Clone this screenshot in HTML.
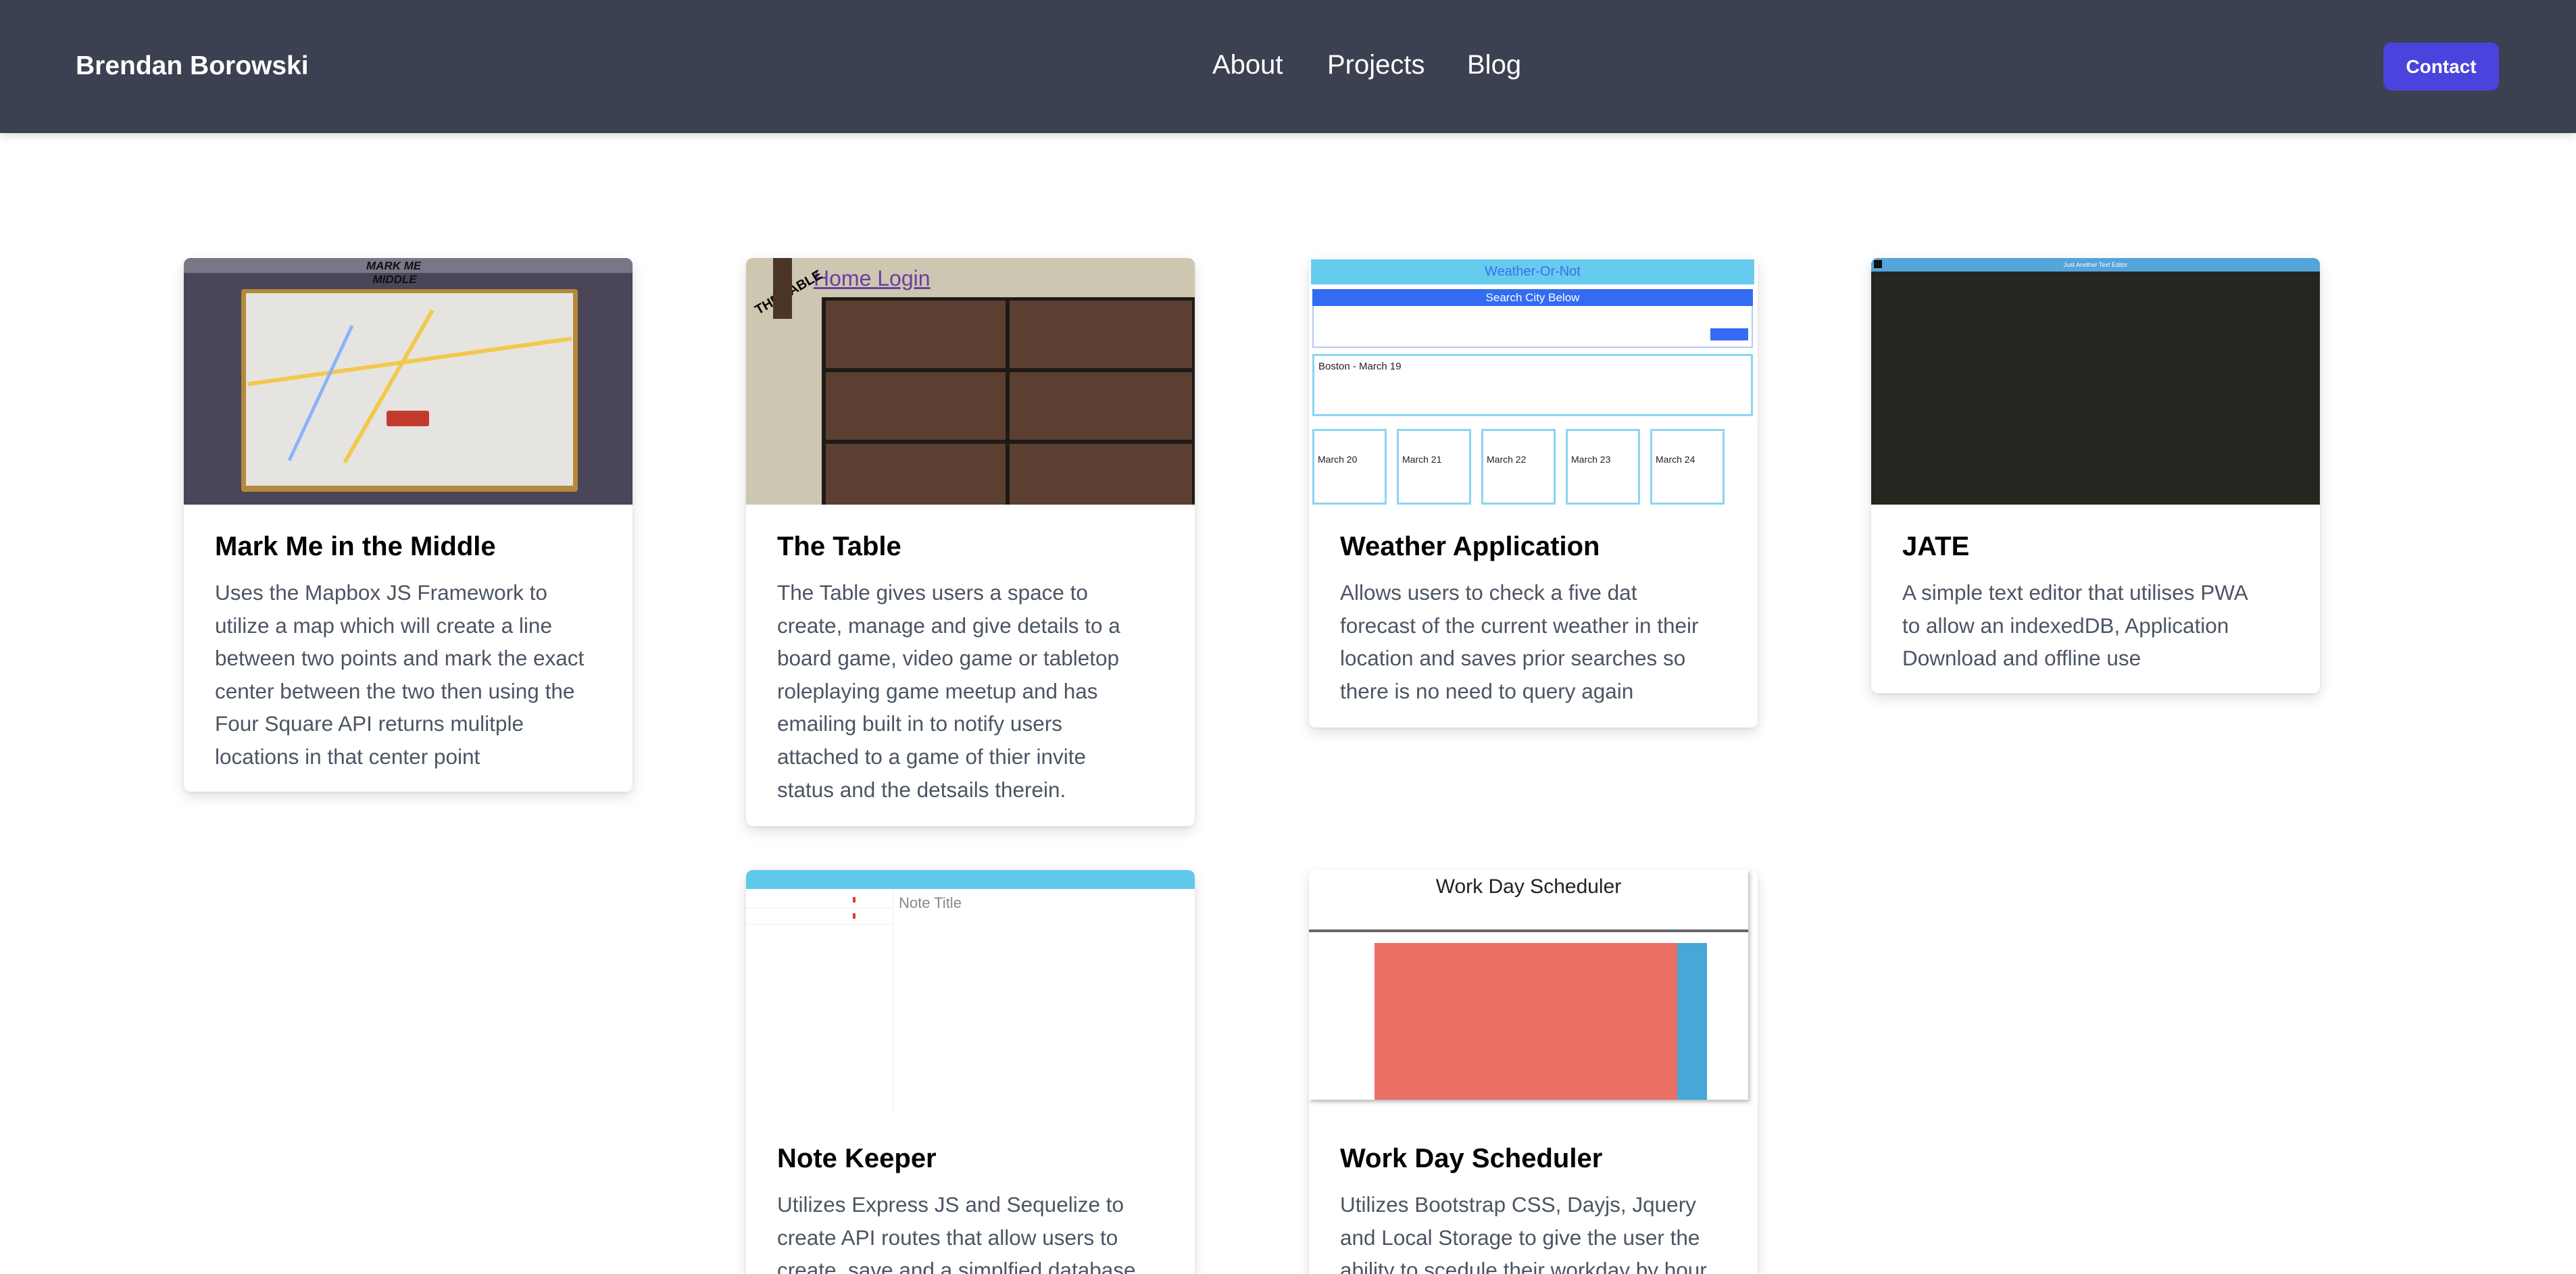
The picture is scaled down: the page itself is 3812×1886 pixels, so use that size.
<!DOCTYPE html>
<html><head><meta charset="utf-8"><style>
*{margin:0;padding:0;box-sizing:border-box}
html{width:3812px;height:1886px;overflow:hidden}
body{width:3812px;height:1886px;overflow:hidden;background:#fff;font-family:"Liberation Sans",sans-serif;position:relative}
.hdr{position:absolute;left:0;top:0;width:3812px;height:197px;background:#3b4151;box-shadow:0 4px 12px rgba(0,0,0,.15)}
.name{position:absolute;left:112px;top:76px;color:#fff;font-weight:bold;font-size:39px}
.nav{position:absolute;top:74px;color:#fff;font-size:40px}
.btn{position:absolute;left:3527px;top:63px;width:171px;height:71px;background:#4b43dd;border-radius:12px;color:#fff;font-weight:bold;font-size:28px;text-align:center;line-height:71px}
.card{position:absolute;width:664px;background:#fff;border-radius:10px;box-shadow:0 8px 20px rgba(0,0,0,.12),0 2px 6px rgba(0,0,0,.06);overflow:hidden}
.img{height:365px;position:relative;overflow:hidden}
.body{padding:34px 46px 27px}
h2{font-size:40px;line-height:56px;color:#000;font-weight:bold}
p{margin-top:16px;font-size:31.5px;line-height:48.6px;color:#4b5563;white-space:nowrap}
.a{position:absolute}
</style></head><body>
<div class="hdr">
<div class="name">Brendan Borowski</div>
<div class="nav" style="left:1794px">About</div>
<div class="nav" style="left:1964px">Projects</div>
<div class="nav" style="left:2171px">Blog</div>
<div class="btn">Contact</div>
</div>

<!-- card 1 -->
<div class="card" style="left:272px;top:382px;height:790px">
<div class="img" style="background:#4a4658">
<div class="a" style="left:0;top:0;width:664px;height:22px;background:#7a7688"></div>
<div class="a" style="left:270px;top:2px;font-size:17px;font-weight:bold;color:#111;font-style:italic">MARK ME<br>&nbsp;&nbsp;MIDDLE</div>
<div class="a" style="left:85px;top:46px;width:498px;height:300px;background:#b38a3c;border-radius:4px"></div>
<div class="a" style="left:92px;top:52px;width:484px;height:285px;background:#e6e4e0"></div>
<div class="a" style="left:92px;top:150px;width:484px;height:6px;background:#f2c94c;transform:rotate(-8deg)"></div>
<div class="a" style="left:300px;top:60px;width:6px;height:260px;background:#f2c94c;transform:rotate(30deg)"></div>
<div class="a" style="left:200px;top:90px;width:5px;height:220px;background:#8ab4f8;transform:rotate(25deg)"></div>
<div class="a" style="left:300px;top:226px;width:63px;height:23px;background:#c23b2e;border-radius:3px"></div>
</div>
<div class="body"><h2>Mark Me in the Middle</h2>
<p>Uses the Mapbox JS Framework to<br>utilize a map which will create a line<br>between two points and mark the exact<br>center between the two then using the<br>Four Square API returns mulitple<br>locations in that center point</p></div>
</div>

<!-- card 2 -->
<div class="card" style="left:1104px;top:382px;height:841px">
<div class="img" style="background:#cdc6b0">
<div class="a" style="left:100px;top:12px;font-size:32px;color:#6b3fa0;text-decoration:underline">Home Login</div>
<div class="a" style="left:8px;top:40px;font-size:20px;font-weight:bold;transform:rotate(-30deg)">THE TABLE</div>
<div class="a" style="left:40px;top:0;width:28px;height:90px;background:#4a3526"></div>
<div class="a" style="left:112px;top:58px;width:552px;height:310px;background:#1f1a17"></div>
<div class="a" style="left:118px;top:63px;width:266px;height:100px;background:#5b3f30"></div>
<div class="a" style="left:390px;top:63px;width:270px;height:100px;background:#5b3f30"></div>
<div class="a" style="left:118px;top:169px;width:266px;height:100px;background:#5b3f30"></div>
<div class="a" style="left:390px;top:169px;width:270px;height:100px;background:#5b3f30"></div>
<div class="a" style="left:118px;top:275px;width:266px;height:100px;background:#5b3f30"></div>
<div class="a" style="left:390px;top:275px;width:270px;height:100px;background:#5b3f30"></div>
</div>
<div class="body"><h2>The Table</h2>
<p>The Table gives users a space to<br>create, manage and give details to a<br>board game, video game or tabletop<br>roleplaying game meetup and has<br>emailing built in to notify users<br>attached to a game of thier invite<br>status and the detsails therein.</p></div>
</div>

<!-- card 3 -->
<div class="card" style="left:1937px;top:382px;height:695px">
<div class="img" style="background:#fff">
<div class="a" style="left:3px;top:2px;width:656px;height:37px;background:#66ccee;color:#3b6cf0;font-size:20px;text-align:center;line-height:37px">Weather-Or-Not</div>
<div class="a" style="left:5px;top:46px;width:652px;height:25px;background:#336cf2;color:#fff;font-size:17px;text-align:center;line-height:25px">Search City Below</div>
<div class="a" style="left:5px;top:71px;width:652px;height:62px;border:2px solid #b7c8f4;border-top:none"></div>
<div class="a" style="left:594px;top:104px;width:56px;height:18px;background:#336cf2"></div>
<div class="a" style="left:5px;top:142px;width:652px;height:92px;border:3px solid #8ad6f2"></div>
<div class="a" style="left:14px;top:152px;font-size:15px;color:#222">Boston - March 19</div>
<div class="a" style="left:5px;top:253px;width:110px;height:112px;border:3px solid #8ad6f2"></div>
<div class="a" style="left:130px;top:253px;width:110px;height:112px;border:3px solid #8ad6f2"></div>
<div class="a" style="left:255px;top:253px;width:110px;height:112px;border:3px solid #8ad6f2"></div>
<div class="a" style="left:380px;top:253px;width:110px;height:112px;border:3px solid #8ad6f2"></div>
<div class="a" style="left:505px;top:253px;width:110px;height:112px;border:3px solid #8ad6f2"></div>
<div class="a" style="left:13px;top:290px;font-size:14px;color:#222">March 20</div>
<div class="a" style="left:138px;top:290px;font-size:14px;color:#222">March 21</div>
<div class="a" style="left:263px;top:290px;font-size:14px;color:#222">March 22</div>
<div class="a" style="left:388px;top:290px;font-size:14px;color:#222">March 23</div>
<div class="a" style="left:513px;top:290px;font-size:14px;color:#222">March 24</div>
</div>
<div class="body"><h2>Weather Application</h2>
<p>Allows users to check a five dat<br>forecast of the current weather in their<br>location and saves prior searches so<br>there is no need to query again</p></div>
</div>

<!-- card 4 -->
<div class="card" style="left:2769px;top:382px;height:644px">
<div class="img" style="background:#262621">
<div class="a" style="left:0;top:0;width:664px;height:20px;background:#55a4da;color:#fff;font-size:9px;text-align:center;line-height:20px">Just Another Text Editor</div>
<div class="a" style="left:4px;top:3px;width:12px;height:12px;background:#111"></div>
</div>
<div class="body"><h2>JATE</h2>
<p>A simple text editor that utilises PWA<br>to allow an indexedDB, Application<br>Download and offline use</p></div>
</div>

<!-- card 5 -->
<div class="card" style="left:1104px;top:1288px;height:598px;border-radius:10px 10px 0 0">
<div class="img" style="background:#fff">
<div class="a" style="left:0;top:0;width:664px;height:28px;background:#5fc9ec"></div>
<div class="a" style="left:0;top:28px;width:218px;height:330px;border-right:1px solid #eee"></div>
<div class="a" style="left:0;top:56px;width:218px;height:1px;background:#eee"></div>
<div class="a" style="left:0;top:80px;width:218px;height:1px;background:#eee"></div>
<div class="a" style="left:158px;top:40px;width:4px;height:8px;background:#e33"></div>
<div class="a" style="left:158px;top:64px;width:4px;height:8px;background:#e33"></div>
<div class="a" style="left:226px;top:36px;font-size:22px;color:#888">Note Title</div>
</div>
<div class="body"><h2>Note Keeper</h2>
<p>Utilizes Express JS and Sequelize to<br>create API routes that allow users to<br>create, save and a simplfied database</p></div>
</div>

<!-- card 6 -->
<div class="card" style="left:1937px;top:1288px;height:598px;border-radius:10px 10px 0 0">
<div class="img" style="background:#fff">
<div class="a" style="left:0;top:0;width:650px;height:340px;box-shadow:2px 3px 6px rgba(0,0,0,.3)"></div>
<div class="a" style="left:0;top:8px;width:650px;text-align:center;font-size:30px;color:#222">Work Day Scheduler</div>
<div class="a" style="left:0;top:88px;width:650px;height:4px;background:#666"></div>
<div class="a" style="left:97px;top:108px;width:448px;height:232px;background:#ea7065"></div>
<div class="a" style="left:545px;top:108px;width:44px;height:232px;background:#47a7d6"></div>
</div>
<div class="body"><h2>Work Day Scheduler</h2>
<p>Utilizes Bootstrap CSS, Dayjs, Jquery<br>and Local Storage to give the user the<br>ability to scedule their workday by hour</p></div>
</div>
</body></html>
